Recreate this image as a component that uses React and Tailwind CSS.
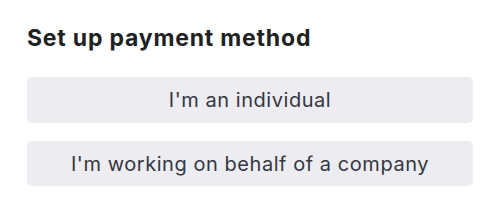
export default function App() {
  return (
    <div className="w-[500px] h-[213px] bg-white px-[27px] pt-[24px] font-['Inter',sans-serif]">
      <h2 className="text-[23px] leading-[28px] font-bold tracking-[0.8px] text-[#202123]">Set up payment method</h2>
      <div className="mt-[25px] flex flex-col gap-[18px]">
        <button className="h-[46px] w-full rounded-[5px] bg-[#ececf1] text-[20px] tracking-[0.55px] text-[#353740]">
          I'm an individual
        </button>
        <button className="h-[45px] w-full rounded-[5px] bg-[#ececf1] text-[20px] tracking-[0.55px] text-[#353740]">
          I'm working on behalf of a company
        </button>
      </div>
    </div>
  );
}
